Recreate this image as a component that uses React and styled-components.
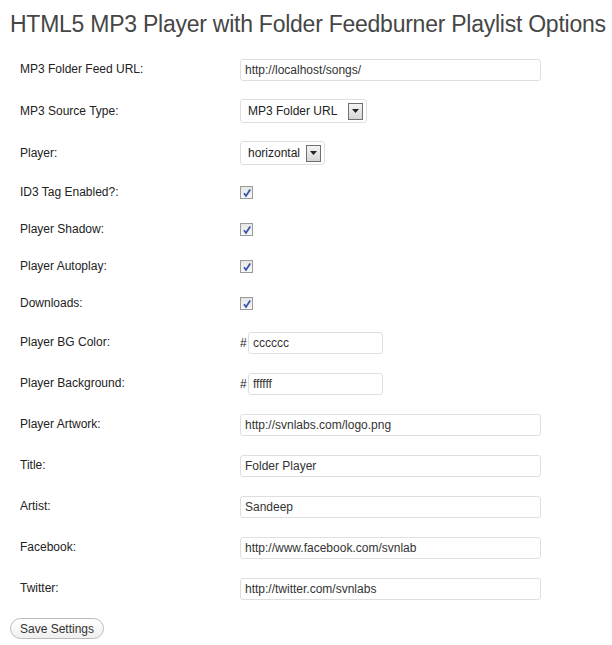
import React from "react";
import styled, { createGlobalStyle } from "styled-components";

const GlobalStyle = createGlobalStyle`
  body {
    margin: 0;
    background: #ffffff;
    font-family: "Liberation Sans", Arial, sans-serif;
  }
`;

//Row heights by kind of control
const rowHeights = { text: 41, color: 41, select: 42, check: 37 };

const fields = [
  { label: "MP3 Folder Feed URL:", type: "text", value: "http://localhost/songs/" },
  { label: "MP3 Source Type:", type: "select", value: "MP3 Folder URL", width: 127 },
  { label: "Player:", type: "select", value: "horizontal", width: 85 },
  { label: "ID3 Tag Enabled?:", type: "check" },
  { label: "Player Shadow:", type: "check" },
  { label: "Player Autoplay:", type: "check" },
  { label: "Downloads:", type: "check" },
  { label: "Player BG Color:", type: "color", value: "cccccc" },
  { label: "Player Background:", type: "color", value: "ffffff" },
  { label: "Player Artwork:", type: "text", value: "http://svnlabs.com/logo.png" },
  { label: "Title:", type: "text", value: "Folder Player" },
  { label: "Artist:", type: "text", value: "Sandeep" },
  { label: "Facebook:", type: "text", value: "http://www.facebook.com/svnlab" },
  { label: "Twitter:", type: "text", value: "http://twitter.com/svnlabs" },
];

const Control = ({ field }) => {
  if (field.type === "select") {
    return (
      <SelectBox $width={field.width}>
        <span>{field.value}</span>
        <ArrowButton>
          <svg width="7" height="4" viewBox="0 0 7 4">
            <path d="M0 0 L7 0 L3.5 4 Z" fill="#222" />
          </svg>
        </ArrowButton>
      </SelectBox>
    );
  }
  if (field.type === "check") {
    return (
      <CheckBox>
        <svg width="10" height="10" viewBox="0 0 10 10">
          <path
            d="M2 5.2 L4 8 L8.2 1.5"
            stroke="#3a56a8"
            strokeWidth="1.8"
            fill="none"
          />
        </svg>
      </CheckBox>
    );
  }
  if (field.type === "color") {
    return (
      <ColorWrap>
        <Hash>#</Hash>
        <TextField $width={135} defaultValue={field.value} readOnly />
      </ColorWrap>
    );
  }
  return <TextField $width={301} defaultValue={field.value} readOnly />;
};

const App = () => {
  return (
    <Page>
      <GlobalStyle />
      <Heading>HTML5 MP3 Player with Folder Feedburner Playlist Options</Heading>
      <Form>
        {fields.map((field) => (
          <Row key={field.label} $height={rowHeights[field.type]}>
            <Label>{field.label}</Label>
            <Control field={field} />
          </Row>
        ))}
        <SaveButton>Save Settings</SaveButton>
      </Form>
    </Page>
  );
};

const Page = styled.div`
  width: 612px;
  height: 645px;
  padding: 0 10px;
  box-sizing: border-box;
  overflow: hidden;
`;

const Heading = styled.h2`
  margin: 0;
  padding-top: 10px;
  height: 48px;
  box-sizing: border-box;
  font-family: "Liberation Sans", Arial, sans-serif;
  font-weight: normal;
  font-size: 23px;
  line-height: 29px;
  color: #464646;
  white-space: nowrap;
  letter-spacing: -0.25px;
`;

const Form = styled.div`
  display: flex;
  flex-direction: column;
  align-items: flex-start;
  padding-top: 1px;
`;

const Row = styled.div`
  display: flex;
  align-items: center;
  height: ${(p) => p.$height}px;
`;

const Label = styled.div`
  width: 230px;
  padding-left: 10px;
  padding-bottom: 1px;
  box-sizing: border-box;
  font-size: 12px;
  color: #222222;
  line-height: 16px;
`;

const TextField = styled.input`
  width: ${(p) => p.$width}px;
  height: 22px;
  box-sizing: border-box;
  margin: 0;
  padding: 0 4px;
  border: 1px solid #dfdfdf;
  border-radius: 3px;
  background: #ffffff;
  font-family: "Liberation Sans", Arial, sans-serif;
  font-size: 12px;
  color: #333333;
  outline: none;
`;

const SelectBox = styled.div`
  width: ${(p) => p.$width}px;
  height: 24px;
  box-sizing: border-box;
  display: flex;
  align-items: center;
  justify-content: space-between;
  padding: 0 3px 0 7px;
  border: 1px solid #dfdfdf;
  border-radius: 3px;
  font-size: 12px;
  color: #222222;
`;

const ArrowButton = styled.span`
  width: 15px;
  height: 17px;
  box-sizing: border-box;
  display: flex;
  align-items: center;
  justify-content: center;
  border: 1px solid #6f6f6f;
  background: linear-gradient(#f4f4f4, #d6d6d6);
`;

const CheckBox = styled.span`
  width: 13px;
  height: 13px;
  box-sizing: border-box;
  display: flex;
  align-items: center;
  justify-content: center;
  border: 1px solid #9a9a9a;
  background: linear-gradient(#e6e6e6, #f8f8f8);
`;

const ColorWrap = styled.div`
  display: flex;
  align-items: center;
`;

const Hash = styled.span`
  width: 8px;
  font-size: 12px;
  color: #222222;
`;

const SaveButton = styled.button`
  height: 21px;
  margin-top: 9px;
  padding: 0 9px;
  border: 1px solid #bbbbbb;
  border-radius: 11px;
  background: linear-gradient(#ffffff, #efefef);
  font-family: "Liberation Sans", Arial, sans-serif;
  font-size: 12px;
  color: #333333;
  cursor: pointer;
`;

export default App;
